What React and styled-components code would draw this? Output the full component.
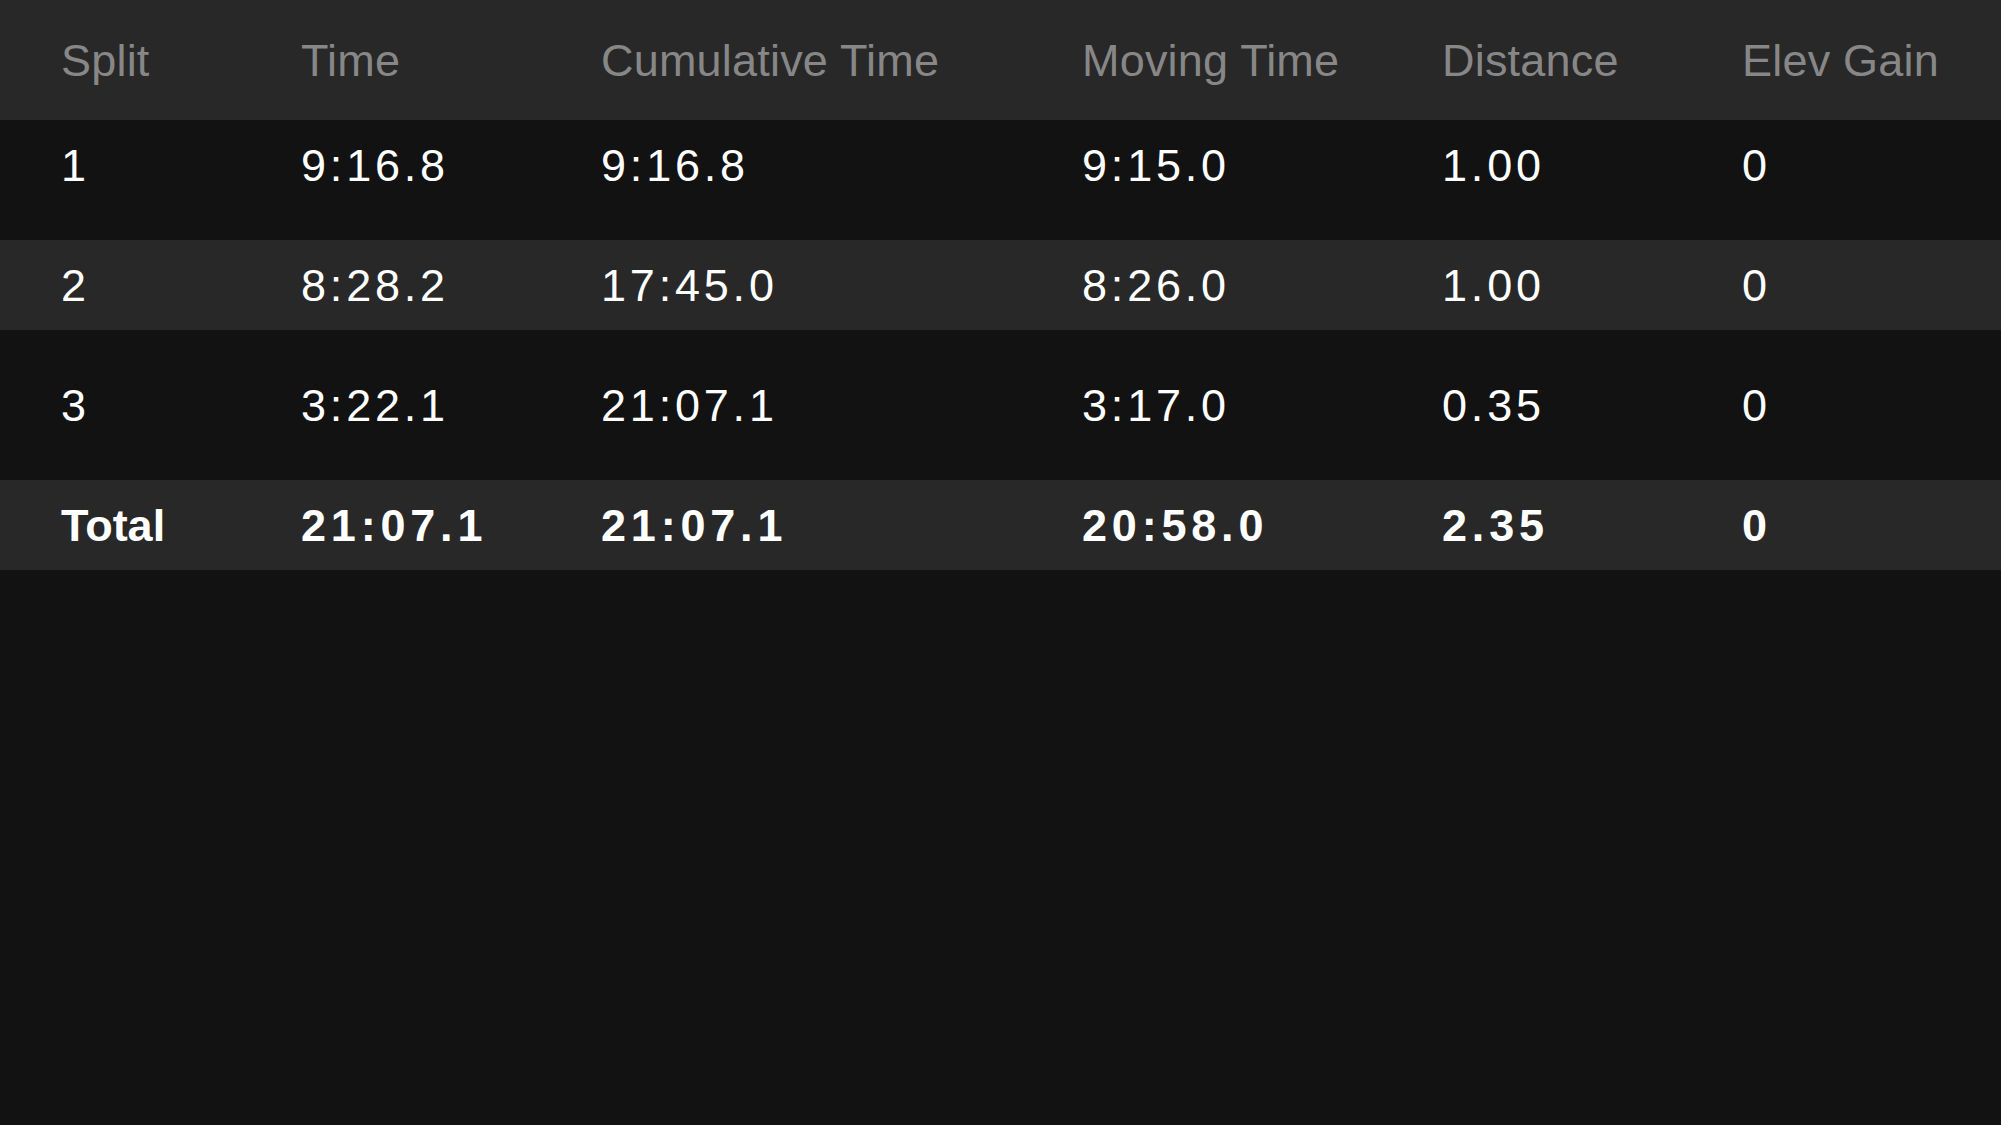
import React from "react";
import styled, { createGlobalStyle } from "styled-components";

const Global = createGlobalStyle`
  html, body {
    margin: 0;
    padding: 0;
    background: #121212;
  }
  body {
    font-family: "Liberation Sans", Arial, sans-serif;
    -webkit-font-smoothing: antialiased;
  }
`;

const Page = styled.div`
  min-height: 100vh;
  background: #121212;
  display: flex;
  flex-direction: column;
`;

const Table = styled.div`
  display: flex;
  flex-direction: column;
  gap: 30px;
`;

const cols = "240px 300px 481px 360px 300px 1fr";

const HeaderRow = styled.div`
  display: grid;
  grid-template-columns: ${cols};
  align-items: center;
  height: 120px;
  padding-left: 61px;
  background: #282828;
  margin-bottom: -30px;
`;

const HeaderCell = styled.div`
  font-size: 45px;
  color: #878787;
  line-height: 1;
  letter-spacing: 0.2px;
  white-space: nowrap;
`;

const Row = styled.div`
  display: grid;
  grid-template-columns: ${cols};
  align-items: center;
  height: 90px;
  padding-left: 61px;
  background: ${(p) => (p.$shaded ? "#282828" : "#121212")};
`;

const Cell = styled.div`
  font-size: 45px;
  line-height: 1;
  color: #ffffff;
  font-weight: ${(p) => (p.$bold ? 700 : 400)};
  letter-spacing: ${(p) => (p.$num ? (p.$bold ? "4.8px" : "3.8px") : "0")};
  white-space: nowrap;
`;

const headers = ["Split", "Time", "Cumulative Time", "Moving Time", "Distance", "Elev Gain"];

const rows = [
  ["1", "9:16.8", "9:16.8", "9:15.0", "1.00", "0"],
  ["2", "8:28.2", "17:45.0", "8:26.0", "1.00", "0"],
  ["3", "3:22.1", "21:07.1", "3:17.0", "0.35", "0"],
];

const total = ["Total", "21:07.1", "21:07.1", "20:58.0", "2.35", "0"];

export default function App() {
  return (
    <Page>
      <Global />
      <Table>
        <HeaderRow>
          {headers.map((h) => (
            <HeaderCell key={h}>{h}</HeaderCell>
          ))}
        </HeaderRow>
        {rows.map((r, i) => (
          <Row key={i} $shaded={i % 2 === 1}>
            {r.map((c, j) => (
              <Cell key={j} $num={j > 0}>
                {c}
              </Cell>
            ))}
          </Row>
        ))}
        <Row $shaded>
          {total.map((c, j) => (
            <Cell key={j} $bold $num={j > 0}>
              {c}
            </Cell>
          ))}
        </Row>
      </Table>
    </Page>
  );
}
